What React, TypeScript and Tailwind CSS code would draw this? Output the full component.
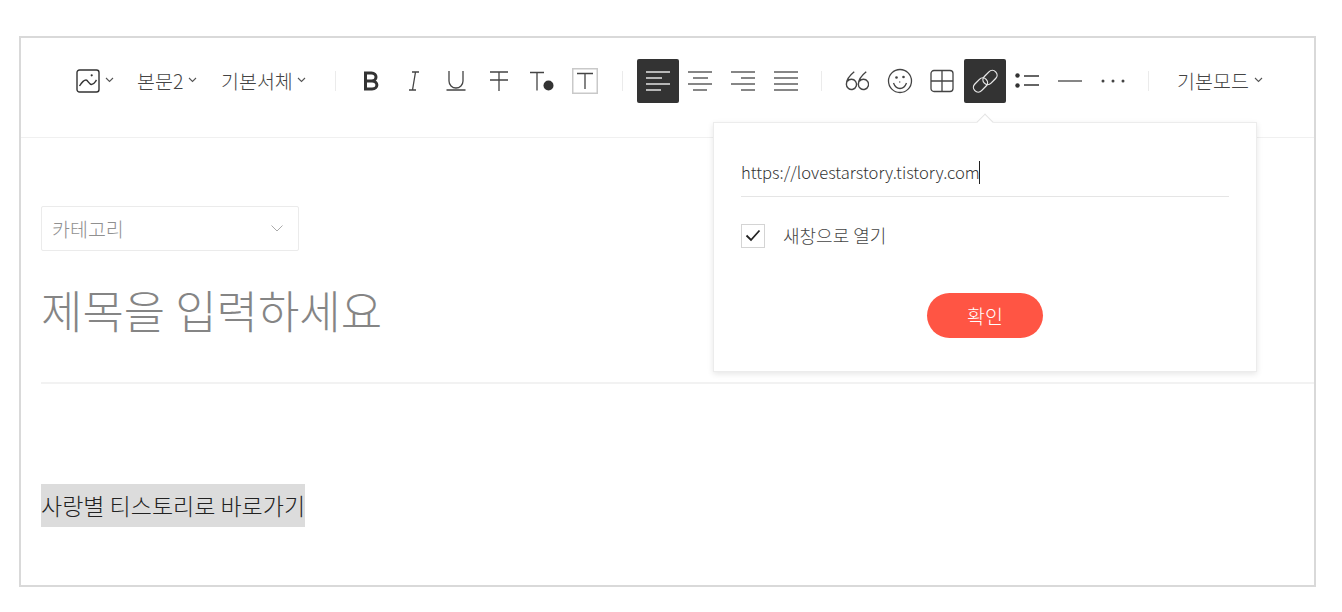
import React from 'react';

const Caret = ({ className = '' }: { className?: string }) => (
  <svg width="9" height="6" viewBox="0 0 9 6" fill="none" stroke="#555" strokeWidth="1.1" className={className}>
    <path d="M1 1l3.5 3.5L8 1" />
  </svg>
);

const Sep = ({ className = '' }: { className?: string }) => <div className={`w-px h-[20px] bg-[#ebebeb] shrink-0 ${className}`} />;

const Btn = ({ active, children }: { active?: boolean; children: React.ReactNode }) => (
  <button className={`w-[42.6px] h-[44px] shrink-0 flex items-center justify-center rounded-[2px] ${active ? 'bg-[#333333]' : ''}`}>
    {children}
  </button>
);

const Icon = ({ children, stroke = '#444', w = 24, h = 24 }: { children: React.ReactNode; stroke?: string; w?: number; h?: number }) => (
  <svg width={w} height={h} viewBox={`0 0 ${w} ${h}`} fill="none" stroke={stroke} strokeWidth="1.3">
    {children}
  </svg>
);

const AlignIcon = ({ rows, stroke = '#444' }: { rows: [number, number][]; stroke?: string }) => (
  <Icon stroke={stroke}>
    {rows.map(([a, b], i) => (
      <path key={i} d={`M${a} ${3 + i * 6}H${b}`} />
    ))}
  </Icon>
);

export default function App() {
  return (
    <div className="w-[1342px] h-[612px] bg-white pt-[36px] pl-[19px] font-['Noto_Sans_CJK_KR','Noto_Sans',sans-serif] overflow-hidden">
      <div className="relative w-[1297px] h-[551px] border-2 border-[#d9d9d9]">
        {/* toolbar */}
        <div className="h-[100px] border-b border-[#f0f0f0] flex items-center pb-[14px] pl-[55px] text-[#444] font-light">
          <svg width="24" height="24" viewBox="0 0 24 24" fill="none" stroke="#333" strokeWidth="1.4" className="shrink-0">
            <rect x="1" y="1" width="22" height="22" rx="2.5" />
            <path d="M3.500 17C6 13 8 11 10 11s3 4.500 5.500 4.500S19 13 20.500 11" />
            <circle cx="15.700" cy="6.300" r="1.100" fill="#333" stroke="none" />
          </svg>
          <Caret className="ml-[5px] mb-[2px]" />
          <span className="ml-[23px] text-[19.500px] leading-none w-[47px] whitespace-nowrap">본문2</span>
          <Caret className="ml-[4px] mb-[2px]" />
          <span className="ml-[24px] text-[19.500px] leading-none w-[73px] whitespace-nowrap">기본서체</span>
          <Caret className="ml-[3px] mb-[2px]" />
          <Sep className="ml-[29px]" />
          <div className="ml-[14px] flex items-center">
            <Btn>
              <Icon stroke="#333">
                <path strokeWidth="3" d="M6.500 3.500v17M5 4h7.500c6 0 6 8 0 8H6.500M6.500 12h6.500c6.500 0 6.500 8 0 8H5" />
              </Icon>
            </Btn>
            <Btn>
              <Icon>
                <path d="M10 3h7M7 21h7M13.500 3L10.500 21" />
              </Icon>
            </Btn>
            <Btn>
              <Icon>
                <path d="M5 2v10a7 7 0 0 0 14 0V2M2.500 21h19" />
              </Icon>
            </Btn>
            <Btn>
              <Icon>
                <path d="M3 3h18M12 3v19M3 11h18" />
              </Icon>
            </Btn>
            <Btn>
              <svg width="26" height="24" viewBox="0 0 26 24" fill="none" stroke="#444" strokeWidth="1.300">
                <path d="M1 3.500h14M8 3.500V21.500" />
                <circle cx="19.500" cy="16.500" r="5" fill="#333" stroke="none" />
              </svg>
            </Btn>
            <Btn>
              <svg width="26" height="26" viewBox="0 0 26 26" fill="none" className="ml-[1px]">
                <rect x=".75" y=".75" width="24.500" height="24.500" stroke="#c9c9c9" strokeWidth="1.500" />
                <path d="M5 5.500h16M13 5.500v15.500" stroke="#444" strokeWidth="1.300" />
              </svg>
            </Btn>
          </div>
          <Sep className="ml-[16px]" />
          <div className="ml-[14px] flex items-center">
            <Btn active>
              <AlignIcon stroke="#fff" rows={[[0, 24], [0, 16], [0, 24], [0, 15]]} />
            </Btn>
            <Btn>
              <AlignIcon rows={[[0, 24], [5, 20], [0, 24], [5, 19]]} />
            </Btn>
            <Btn>
              <AlignIcon rows={[[0, 24], [10, 24], [0, 24], [10, 24]]} />
            </Btn>
            <Btn>
              <AlignIcon rows={[[0, 24], [0, 24], [0, 24], [0, 24]]} />
            </Btn>
          </div>
          <Sep className="ml-[14px]" />
          <div className="ml-[14px] flex items-center">
            <Btn>
              <svg width="24" height="22" viewBox="0 0 26 22" fill="none" stroke="#444" strokeWidth="1.500">
                <path d="M10 1C5 5 1.500 9 1.500 14.500a5.500 5.500 0 1 0 1-3" />
                <path d="M23 1c-5 4-8.500 8-8.500 13.500a5.500 5.500 0 1 0 1-3" />
              </svg>
            </Btn>
            <Btn>
              <svg width="26" height="26" viewBox="0 0 26 26" fill="none" stroke="#444" strokeWidth="1.300">
                <circle cx="13" cy="13" r="11.500" />
                <circle cx="9.500" cy="9.500" r="1.300" fill="#444" stroke="none" />
                <circle cx="16.500" cy="9" r="1.300" fill="#444" stroke="none" />
                <path d="M12.500 13.500l.500 1" />
                <path d="M6.500 15c1.500 4 4 5.500 6.500 5.500s5-1.500 6.500-5.500" />
              </svg>
            </Btn>
            <Btn>
              <Icon>
                <rect x="1" y="1.500" width="22" height="21" rx="3" />
                <path d="M12 1.500v21M1 12h22" />
              </Icon>
            </Btn>
            <Btn active>
              <svg width="26" height="26" viewBox="0 0 26 26" fill="none" stroke="#e8e8e8" strokeWidth="1.300">
                <rect x=".5" y="12.250" width="16" height="9.500" rx="4.750" transform="rotate(-45 8.500 17)" />
                <rect x="10" y="4.750" width="16" height="9.500" rx="4.750" transform="rotate(-45 18 9.500)" />
              </svg>
            </Btn>
            <Btn>
              <svg width="24" height="18" viewBox="0 0 24 18" fill="none" stroke="#333" strokeWidth="1.300" className="mr-[2px]">
                <circle cx="2.500" cy="3.500" r="2.200" fill="#333" stroke="none" />
                <circle cx="2.500" cy="13.500" r="2.200" fill="#333" stroke="none" />
                <path d="M9 4h15M9 13h15" />
              </svg>
            </Btn>
            <Btn>
              <svg width="24" height="4" viewBox="0 0 24 4" fill="none" stroke="#444" strokeWidth="1.300">
                <path d="M0 2h24" />
              </svg>
            </Btn>
            <Btn>
              <svg width="24" height="4" viewBox="0 0 24 4" fill="#444">
                <circle cx="2" cy="2" r="1.500" />
                <circle cx="12" cy="2" r="1.500" />
                <circle cx="22" cy="2" r="1.500" />
              </svg>
            </Btn>
          </div>
          <Sep className="ml-[14px]" />
          <span className="ml-[28px] text-[19.500px] leading-none w-[73px] whitespace-nowrap">기본모드</span>
          <Caret className="ml-[4px] mb-[2px]" />
        </div>

        {/* body */}
        <div className="pl-[20px]">
          <div className="mt-[68px] w-[258px] h-[45px] border border-[#ebebeb] rounded-[2px] flex items-center justify-between pl-[10px] pr-[15px]">
            <span className="text-[19.500px] font-light text-[#909090]">카테고리</span>
            <svg width="12" height="7" viewBox="0 0 12 7" fill="none" stroke="#aaa" strokeWidth="1">
              <path d="M.5.5L6 6l5.500-5.500" />
            </svg>
          </div>
          <div className="mt-[28px] h-[61px] text-[45px] leading-[61px] font-light text-[#858585] whitespace-nowrap">제목을 입력하세요</div>
          <div className="mt-[42px] h-[2px] bg-[#f2f2f2]" />
          <div className="mt-[100px]">
            <span className="inline-block h-[43px] leading-[43px] bg-[#dcdcdc] text-[23px] font-light text-[#222] whitespace-nowrap">사랑별 티스토리로 바로가기</span>
          </div>
        </div>

        {/* link popover */}
        <div className="absolute left-[692px] top-[84px] w-[544px] h-[250px] bg-white border border-[#ececec] shadow-[0_2px_6px_rgba(0,0,0,0.1)] px-[27px] pt-[30px]">
          <div className="absolute left-[265px] top-[-7px] w-[12px] h-[12px] rotate-45 bg-white border-l border-t border-[#e4e4e4]" />
          <div className="h-[44px] w-[488px] border-b border-[#e5e5e5] flex items-center pb-[4px] text-[16.600px] text-[#333] font-light whitespace-nowrap">
            https://lovestarstory.tistory.com
            <span className="w-px h-[23px] bg-[#222] ml-[-1px]" />
          </div>
          <div className="mt-[25px] flex items-center">
            <div className="w-[24px] h-[24px] border border-[#d4d4d4] flex items-center justify-center">
              <svg width="16" height="13" viewBox="0 0 16 13" fill="none" stroke="#222" strokeWidth="1.800">
                <path d="M1.500 6.500L6 11l8.500-9.500" />
              </svg>
            </div>
            <span className="ml-[18px] text-[18px] font-light text-[#444]">새창으로 열기</span>
          </div>
          <button className="block mx-auto mt-[44px] w-[116px] h-[45px] rounded-full bg-[#ff5544] text-white text-[19.500px] font-light">확인</button>
        </div>
      </div>
    </div>
  );
}
